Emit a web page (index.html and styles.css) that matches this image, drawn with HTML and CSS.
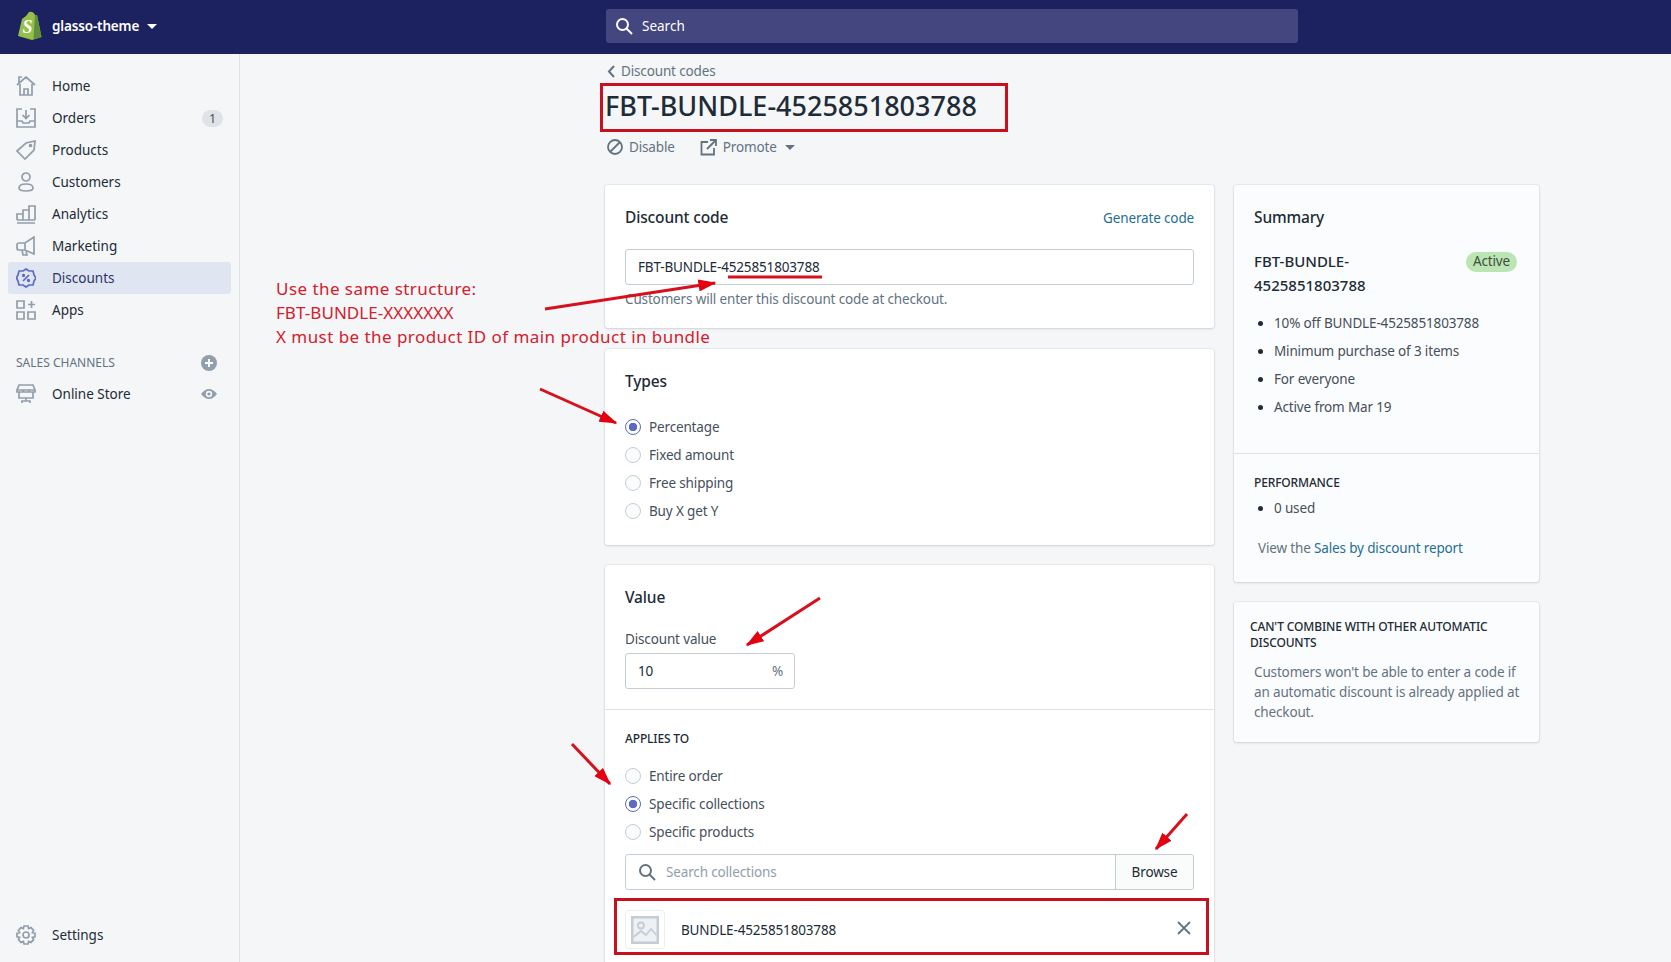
FILE: index.html
```html
<!DOCTYPE html>
<html>
    <head>
        <meta charset="UTF-8" />
        <title>FBT-BUNDLE-4525851803788</title>
        <link rel="stylesheet" href="styles.css">
    </head>

    <body>
        <header class="topbar">
            <div class="store">
                <svg class="logo" width="26" height="30" viewBox="0 0 26 30">
                    <path d="M2 25 L6 8 Q11 5 13 1 Q17 0 19 4 L21 4 L25.5 26 L16 29 Z" fill="#95bf47"/>
                    <path d="M19 4 L21 4 L25.5 26 L17.5 28.5 Z" fill="#5e8e3e"/>
                    <text x="6.5" y="22" class="logo-s">S</text>
                </svg>
                <span class="store-name">glasso-theme</span>
                <span class="caret-white"></span>
            </div>
            <div class="search">
                <svg width="18" height="18" viewBox="0 0 18 18" fill="none" stroke="#fff" stroke-width="2"><circle cx="7.5" cy="7.5" r="5.5"/><path d="M11.5 11.5 L17 17"/></svg>
                <span>Search</span>
            </div>
        </header>

        <div class="frame">
            <nav class="sidebar">
                <a class="nav-item">
                    <svg class="nav-icon" viewBox="0 0 20 20"><path d="M1 9 L10 1 L19 9 M3 7 V1 H6 M4 8 V19 H16 V8 M8 19 V13 H12 V19"/></svg>
                    Home
                </a>
                <a class="nav-item">
                    <svg class="nav-icon" viewBox="0 0 20 20"><path d="M6 1 H1 V19 H19 V1 H14 M10 2 V10 M6.5 7 L10 10.5 L13.5 7 M1 13 H6 L7 15 H13 L14 13 H19"/></svg>
                    Orders
                    <span class="count">1</span>
                </a>
                <a class="nav-item">
                    <svg class="nav-icon" viewBox="0 0 20 20"><path d="M1 11 L10 3 L19 1 L18 10 L9 19 Z"/><circle cx="14.5" cy="5.5" r="1"/></svg>
                    Products
                </a>
                <a class="nav-item">
                    <svg class="nav-icon" viewBox="0 0 20 20"><circle cx="10" cy="5" r="4"/><path d="M3 16 Q3 12 10 12 Q17 12 17 16 Q17 19 10 19 Q3 19 3 16 Z"/></svg>
                    Customers
                </a>
                <a class="nav-item">
                    <svg class="nav-icon" viewBox="0 0 20 20"><path d="M1 19 H19 M1 16 V10 H7 V16 M7 16 V6 H13 V16 M13 16 V2 H19 V16 M1 16 H19"/></svg>
                    Analytics
                </a>
                <a class="nav-item">
                    <svg class="nav-icon" viewBox="0 0 20 20"><path d="M18 1 V18 L9 14 H3 Q1 14 1 12 V9 Q1 7 3 7 H9 Z M6 14 L7 19 H11 L10 15.5 M9 7 V14"/></svg>
                    Marketing
                </a>
                <a class="nav-item active">
                    <svg class="nav-icon" viewBox="0 0 20 20"><path d="M10 1 L13 3 L17 3 L18 7 L20 10 L18 13 L17 17 L13 17 L10 19 L7 17 L3 17 L2 13 L0.5 10 L2 7 L3 3 L7 3 Z"/><path d="M7 13 L13 7"/><circle cx="7.5" cy="7.5" r="0.8"/><circle cx="12.5" cy="12.5" r="0.8"/></svg>
                    Discounts
                </a>
                <a class="nav-item">
                    <svg class="nav-icon" viewBox="0 0 20 20"><path d="M1 1 H8 V8 H1 Z M1 12 H8 V19 H1 Z M12 12 H19 V19 H12 Z M15.5 1 V8 M12 4.5 H19"/></svg>
                    Apps
                </a>

                <div class="channels-head">
                    <span>SALES CHANNELS</span>
                    <svg width="16" height="16" viewBox="0 0 16 16"><circle cx="8" cy="8" r="8" fill="#919eab"/><path d="M8 4 V12 M4 8 H12" stroke="#fff" stroke-width="2"/></svg>
                </div>
                <a class="nav-item">
                    <svg class="nav-icon" viewBox="0 0 20 20"><path d="M3 1 H17 L19 6 V8 H1 V6 Z M1 6 H19 M3 8 V14 H17 V8 M7 8 V6 M13 8 V6 M10 14 V17 M6 19 V17 H14 V19"/></svg>
                    Online Store
                    <svg class="eye" width="16" height="12" viewBox="0 0 16 12"><path d="M0 6 Q8 -4 16 6 Q8 16 0 6 Z" fill="#919eab"/><circle cx="8" cy="6" r="3.2" fill="#f4f6f8"/><circle cx="8" cy="6" r="1.6" fill="#919eab"/></svg>
                </a>

                <a class="nav-item settings">
                    <svg class="nav-icon" viewBox="0 0 20 20"><path d="M8 1 H12 L12.6 3.6 L15 2.6 L17.6 5.4 L16.4 7.6 L19 8.2 V11.8 L16.4 12.4 L17.6 14.6 L15 17.4 L12.6 16.4 L12 19 H8 L7.4 16.4 L5 17.4 L2.4 14.6 L3.6 12.4 L1 11.8 V8.2 L3.6 7.6 L2.4 5.4 L5 2.6 L7.4 3.6 Z"/><circle cx="10" cy="10" r="3"/></svg>
                    Settings
                </a>
            </nav>

            <main class="main">
                <div class="breadcrumb">
                    <svg width="8" height="13" viewBox="0 0 8 13" fill="none" stroke="#637381" stroke-width="2"><path d="M7 1 L2 6.5 L7 12"/></svg>
                    Discount codes
                </div>
                <h1 class="page-title">FBT-BUNDLE-4525851803788</h1>
                <div class="actions">
                    <span class="action">
                        <svg width="16" height="16" viewBox="0 0 16 16" fill="none" stroke="#637381" stroke-width="1.8"><circle cx="8" cy="8" r="7"/><path d="M3 13 L13 3"/></svg>
                        Disable
                    </span>
                    <span class="action">
                        <svg width="17" height="17" viewBox="0 0 17 17" fill="none" stroke="#637381" stroke-width="1.8"><path d="M8 3 H1.5 V15.5 H14 V9 M10 1 H16 V7 M16 1 L7 10"/></svg>
                        Promote
                        <span class="caret-grey"></span>
                    </span>
                </div>

                <div class="columns">
                    <div class="col-main">
                        <section class="card code-card">
                            <div class="card-head">
                                <h2>Discount code</h2>
                                <a class="link">Generate code</a>
                            </div>
                            <div class="input code-input">FBT-BUNDLE-4525851803788</div>
                            <p class="help">Customers will enter this discount code at checkout.</p>
                        </section>

                        <section class="card types-card">
                            <h2>Types</h2>
                            <ul class="radios">
                                <li><span class="radio on"></span>Percentage</li>
                                <li><span class="radio"></span>Fixed amount</li>
                                <li><span class="radio"></span>Free shipping</li>
                                <li><span class="radio"></span>Buy X get Y</li>
                            </ul>
                        </section>

                        <section class="card value-card">
                            <div class="value-top">
                                <h2>Value</h2>
                                <label class="field-label">Discount value</label>
                                <div class="input value-input"><span>10</span><span class="muted">%</span></div>
                            </div>
                            <div class="value-bottom">
                                <h3 class="caps">APPLIES TO</h3>
                                <ul class="radios">
                                    <li><span class="radio"></span>Entire order</li>
                                    <li><span class="radio on"></span>Specific collections</li>
                                    <li><span class="radio"></span>Specific products</li>
                                </ul>
                                <div class="input browse-row">
                                    <div class="browse-search">
                                        <svg width="18" height="18" viewBox="0 0 18 18" fill="none" stroke="#637381" stroke-width="2"><circle cx="7.5" cy="7.5" r="5.5"/><path d="M11.5 11.5 L17 17"/></svg>
                                        <span class="placeholder">Search collections</span>
                                    </div>
                                    <div class="browse-btn">Browse</div>
                                </div>
                                <div class="picked">
                                    <div class="thumb">
                                        <svg width="28" height="28" viewBox="0 0 28 28"><rect width="28" height="28" fill="#c4cdd5"/><rect x="2.5" y="2.5" width="23" height="23" fill="#eef1f3"/><circle cx="10" cy="9.5" r="3" fill="none" stroke="#c4cdd5" stroke-width="1.8"/><path d="M2.5 21 L10 15 L15 19 L20 13 L25.5 19" fill="none" stroke="#c4cdd5" stroke-width="1.8"/></svg>
                                    </div>
                                    <span>BUNDLE-4525851803788</span>
                                    <svg class="remove" width="14" height="14" viewBox="0 0 14 14" stroke="#637381" stroke-width="1.8"><path d="M1 1 L13 13 M13 1 L1 13"/></svg>
                                </div>
                            </div>
                        </section>
                    </div>

                    <aside class="col-side">
                        <section class="card side-card summary">
                            <h2>Summary</h2>
                            <div class="summary-code">
                                <strong>FBT-BUNDLE-<br>4525851803788</strong>
                                <span class="badge">Active</span>
                            </div>
                            <ul class="bullets">
                                <li>10% off BUNDLE-4525851803788</li>
                                <li>Minimum purchase of 3 items</li>
                                <li>For everyone</li>
                                <li>Active from Mar 19</li>
                            </ul>
                            <div class="summary-perf">
                                <h3 class="caps">PERFORMANCE</h3>
                                <ul class="bullets">
                                    <li>0 used</li>
                                </ul>
                                <p class="report">View the <a class="link">Sales by discount report</a></p>
                            </div>
                        </section>

                        <section class="card side-card combine">
                            <h3 class="caps">CAN'T COMBINE WITH OTHER AUTOMATIC DISCOUNTS</h3>
                            <p>Customers won't be able to enter a code if an automatic discount is already applied at checkout.</p>
                        </section>
                    </aside>
                </div>
            </main>
        </div>

        <!-- red markup drawn over the screenshot -->
        <div class="markup-note">
            Use the same structure:<br>
            <span class="note-code">FBT-BUNDLE-XXXXXXX</span><br>
            X must be the product ID of main product in bundle
        </div>
        <div class="markup-box box-title"></div>
        <div class="markup-box box-picked"></div>
        <svg class="markup-arrows" width="1671" height="962" viewBox="0 0 1671 962">
            <defs>
                <marker id="head" markerWidth="6" markerHeight="4" refX="5.5" refY="2" orient="auto">
                    <path d="M0 0 L6 2 L0 4 Z" fill="#e3000f"/>
                </marker>
            </defs>
            <g stroke="#d8101c" stroke-width="3" fill="none">
                <path d="M545 309 L715 283" marker-end="url(#head)"/>
                <path d="M540 389 L616 423" marker-end="url(#head)"/>
                <path d="M820 598 L747 645" marker-end="url(#head)"/>
                <path d="M572 744 L610 784" marker-end="url(#head)"/>
                <path d="M1187 814 L1156 849" marker-end="url(#head)"/>
            </g>
            <path d="M728 277 H822" stroke="#d8101c" stroke-width="3"/>
        </svg>
    </body>
</html>
```

FILE: styles.css
```css
* {
    margin: 0;
    padding: 0;
    box-sizing: border-box;
}

body {
    display: flex;
    flex-direction: column;
    height: 100vh;
    overflow: hidden;
    position: relative;
    background-color: #f4f6f8;
    color: #212b36;
    font-family: "Noto Sans", sans-serif;
    font-size: 13.5px;
    line-height: 20px;
}

ul {
    list-style: none;
}

h2 {
    font-size: 15.5px;
    font-weight: 500;
    line-height: 24px;
}

.link {
    color: #1f6f96;
}

/* Top bar */
.topbar {
    display: flex;
    align-items: center;
    flex: none;
    height: 54px;
    padding-bottom: 2px;
    background-color: #1c2260;
    color: white;
}

.store {
    display: flex;
    align-items: center;
    width: 606px;
    padding-left: 16px;
}

.logo-s {
    font-family: "Liberation Serif", serif;
    font-weight: bold;
    font-style: italic;
    font-size: 18px;
    fill: white;
}

.store-name {
    margin-left: 10px;
    font-weight: 600;
    letter-spacing: -0.15px;
}

.caret-white,
.caret-grey {
    width: 0;
    height: 0;
    border-left: 5px solid transparent;
    border-right: 5px solid transparent;
    border-top: 5px solid white;
}

.caret-white {
    margin-left: 8px;
}

.caret-grey {
    margin-left: 2px;
    border-top-color: #637381;
}

.search {
    display: flex;
    align-items: center;
    gap: 9px;
    width: 692px;
    height: 34px;
    padding-left: 9px;
    border-radius: 3px;
    background-color: #43467f;
}

/* Sidebar */
.frame {
    display: flex;
    flex: 1;
    min-height: 0;
}

.sidebar {
    display: flex;
    flex-direction: column;
    flex: none;
    width: 240px;
    padding: 16px 8px 11px;
    border-right: 1px solid #dfe3e8;
}

.nav-item {
    display: flex;
    align-items: center;
    flex: none;
    height: 32px;
    padding: 0 8px;
    border-radius: 3px;
    color: #212b36;
}

.nav-icon {
    flex: none;
    width: 20px;
    height: 20px;
    margin-right: 16px;
    fill: none;
    stroke: #919eab;
    stroke-width: 1.7;
}

.nav-item.active {
    background-color: #e0e5f2;
    color: #2c3469;
}

.active .nav-icon {
    stroke: #5c6ac4;
}

.count {
    margin-left: auto;
    margin-right: 0;
    width: 21px;
    height: 17px;
    border-radius: 9px;
    background-color: #dfe3e8;
    color: #454f5b;
    font-size: 12.5px;
    line-height: 17px;
    text-align: center;
}

.channels-head {
    display: flex;
    justify-content: space-between;
    align-items: center;
    height: 20px;
    margin-top: 27px;
    margin-bottom: 5px;
    padding: 0 14px 0 8px;
    color: #637381;
    font-size: 12px;
}

.eye {
    margin-left: auto;
    margin-right: 6px;
}

.settings {
    margin-top: auto;
}

/* Page */
.main {
    flex: 1;
    padding: 7px 0 0 365px;
    letter-spacing: -0.15px;
}

.breadcrumb {
    display: flex;
    align-items: center;
    gap: 6px;
    height: 20px;
    padding-left: 2px;
    color: #637381;
}

.page-title {
    margin-top: 5px;
    font-size: 27px;
    font-weight: 500;
    line-height: 40px;
    letter-spacing: 0;
}

.actions {
    display: flex;
    gap: 25px;
    height: 24px;
    margin-top: 9px;
    padding-left: 2px;
    color: #637381;
}

.action {
    display: flex;
    align-items: center;
    gap: 6px;
}

.columns {
    display: flex;
    gap: 20px;
    margin-top: 26px;
}

.col-main {
    display: flex;
    flex-direction: column;
    width: 609px;
}

.col-side {
    width: 305px;
}

.card {
    border-radius: 3px;
    background-color: white;
    box-shadow: 0 0 0 1px rgba(63, 63, 68, 0.05), 0 1px 3px 0 rgba(63, 63, 68, 0.15);
}

.code-card {
    height: 143px;
    padding: 20px;
}

.card-head {
    display: flex;
    justify-content: space-between;
    align-items: center;
}

.card-head .link {
    padding-top: 2px;
}

.input {
    height: 36px;
    border: 1px solid #c4cdd5;
    border-radius: 3px;
    background-color: white;
}

.code-input {
    margin-top: 20px;
    padding: 7px 12px;
}

.help {
    margin-top: 4px;
    color: #637381;
}

.types-card {
    margin-top: 21px;
    padding: 20px;
}

.radios {
    margin-top: 20px;
}

.radios li {
    display: flex;
    align-items: center;
    gap: 8px;
    height: 28px;
    color: #454f5b;
}

.radio {
    width: 16px;
    height: 16px;
    border: 1px solid #c4cdd5;
    border-radius: 50%;
    background-color: #fbfcfc;
}

.radio.on {
    border-color: #5c6ac4;
    background: radial-gradient(circle, #5c6ac4 0 4px, white 4.5px);
}

.value-card {
    margin-top: 20px;
}

.value-top {
    padding: 20px 20px 20px;
    border-bottom: 1px solid #dfe3e8;
}

.field-label {
    display: block;
    margin-top: 20px;
    margin-bottom: 4px;
    color: #454f5b;
}

.value-input {
    display: flex;
    justify-content: space-between;
    width: 170px;
    padding: 7px 11px 7px 12px;
}

.muted {
    color: #637381;
}

.value-bottom {
    padding: 19px 20px 20px;
}

.caps {
    font-size: 12px;
    font-weight: 500;
    line-height: 20px;
}

.value-bottom .radios {
    margin-top: 13px;
}

.browse-row {
    display: flex;
    margin-top: 8px;
}

.browse-search {
    display: flex;
    align-items: center;
    flex: 1;
    gap: 10px;
    padding-left: 12px;
}

.placeholder {
    color: #919eab;
}

.browse-btn {
    width: 78px;
    border-left: 1px solid #c4cdd5;
    background-color: #fafbfb;
    border-radius: 0 3px 3px 0;
    color: #212b36;
    line-height: 34px;
    text-align: center;
}

.picked {
    display: flex;
    align-items: center;
    height: 39px;
    margin-top: 20px;
}

.thumb {
    display: flex;
    align-items: center;
    justify-content: center;
    flex: none;
    width: 40px;
    height: 39px;
    margin-right: 16px;
    border: 1px solid #eceff1;
    border-radius: 3px;
}

.remove {
    margin-left: auto;
    margin-right: 3px;
    margin-bottom: 4px;
}

/* Right column */
.side-card {
    background-color: #fbfcfd;
}

.summary {
    height: 397px;
    padding: 20px 0 0;
}

.summary h2,
.summary-code,
.summary > .bullets {
    margin-left: 20px;
    margin-right: 22px;
}

.summary-code {
    display: flex;
    justify-content: space-between;
    align-items: flex-start;
    margin-top: 20px;
    line-height: 24px;
}

.summary-code strong {
    font-weight: 500;
    font-size: 15px;
    letter-spacing: 0;
}

.badge {
    margin-top: 3px;
    padding: 0 7px;
    height: 20px;
    border-radius: 10px;
    background-color: #bbe5b3;
    color: #414f3e;
    line-height: 19px;
}

.bullets {
    margin-top: 12px;
}

.bullets li {
    position: relative;
    height: 28px;
    padding-left: 20px;
    color: #454f5b;
    line-height: 28px;
}

.bullets li::before {
    content: "";
    position: absolute;
    left: 4px;
    top: 12px;
    width: 5px;
    height: 5px;
    border-radius: 50%;
    background-color: #212b36;
}

.summary > .bullets {
    padding-bottom: 32px;
}

.summary-perf {
    padding: 19px 20px 0;
    border-top: 1px solid #dfe3e8;
}

.summary-perf .bullets {
    margin-top: 1px;
}

.report {
    margin-top: 16px;
    margin-left: 4px;
    color: #637381;
}

.combine {
    height: 140px;
    margin-top: 20px;
    padding: 17px 14px 0 16px;
}

.combine .caps {
    line-height: 16px;
}

.combine p {
    margin-top: 11px;
    margin-left: 4px;
    color: #637381;
}

/* Markup on top of the screenshot */
.markup-note {
    position: absolute;
    left: 276px;
    top: 277px;
    color: #d3202b;
    font-size: 17px;
    line-height: 24px;
    letter-spacing: 0.45px;
}

.note-code {
    letter-spacing: 0.05px;
}

.markup-box {
    position: absolute;
    border: 3px solid #c8101e;
}

.box-title {
    left: 600px;
    top: 83px;
    width: 408px;
    height: 49px;
}

.box-picked {
    left: 614px;
    top: 898px;
    width: 595px;
    height: 57px;
}

.markup-arrows {
    position: absolute;
    left: 0;
    top: 0;
}
```
